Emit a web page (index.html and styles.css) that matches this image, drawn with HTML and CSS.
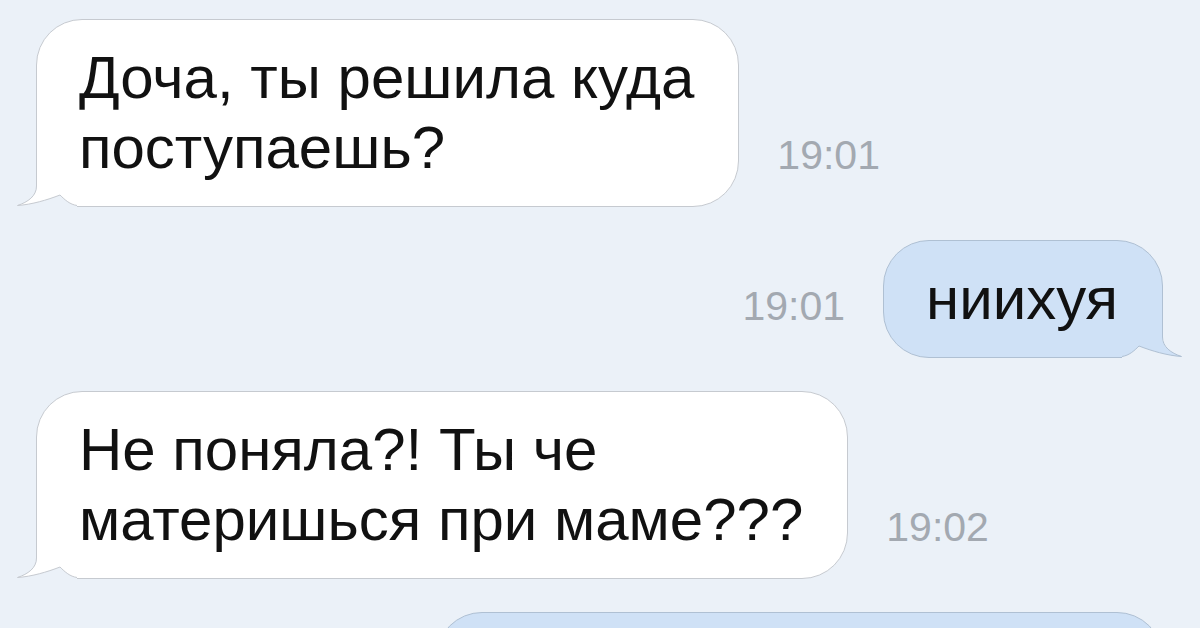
FILE: index.html
```html
<!DOCTYPE html>
<html lang="ru">
<head>
    <meta charset="UTF-8">
    <meta name="viewport" content="width=device-width, initial-scale=1.0">
    <title>Чат</title>
    <link rel="stylesheet" href="styles.css">
</head>
<body>
    <div class="chat">
        <div class="row">
            <div class="bubble bubble-in">
                Доча, ты решила куда<br>поступаешь?
                <svg class="tail" viewBox="0 0 60 41">
                    <rect class="tail-bg" x="0" y="18" width="60" height="23"/>
                    <path class="tail-fill" d="M20 0 V20 C20 30 11 36 0.5 39.5 C15 38.5 30 34 43 29 C48 34 53 38.5 60 39.5 V0 Z"/>
                    <path class="tail-line" d="M19.5 18 V20 C19.5 30 11 36 0.5 39.5 C15 38.5 30 34 43 29 C48 34 53 38.5 60 39.5"/>
                </svg>
            </div>
            <span class="time">19:01</span>
        </div>

        <div class="row row-out">
            <span class="time">19:01</span>
            <div class="bubble bubble-out">
                ниихуя
                <svg class="tail tail-out" viewBox="0 0 60 41">
                    <rect class="tail-bg" x="0" y="18" width="60" height="23"/>
                    <path class="tail-fill" d="M20 0 V20 C20 30 11 36 0.5 39.5 C15 38.5 30 34 43 29 C48 34 53 38.5 60 39.5 V0 Z"/>
                    <path class="tail-line" d="M19.5 18 V20 C19.5 30 11 36 0.5 39.5 C15 38.5 30 34 43 29 C48 34 53 38.5 60 39.5"/>
                </svg>
            </div>
        </div>

        <div class="row">
            <div class="bubble bubble-in">
                Не поняла?! Ты че<br>материшься при маме???
                <svg class="tail" viewBox="0 0 60 41">
                    <rect class="tail-bg" x="0" y="18" width="60" height="23"/>
                    <path class="tail-fill" d="M20 0 V20 C20 30 11 36 0.5 39.5 C15 38.5 30 34 43 29 C48 34 53 38.5 60 39.5 V0 Z"/>
                    <path class="tail-line" d="M19.5 18 V20 C19.5 30 11 36 0.5 39.5 C15 38.5 30 34 43 29 C48 34 53 38.5 60 39.5"/>
                </svg>
            </div>
            <span class="time">19:02</span>
        </div>

        <div class="row row-out">
            <div class="bubble bubble-out bubble-cut"></div>
        </div>
    </div>
</body>
</html>
```

FILE: styles.css
```css
body {
    margin: 0;
    height: 628px;
    overflow: hidden;
    background-color: #ebf1f8;
    font-family: "Liberation Sans", Arial, sans-serif;
}
.chat {
    display: flex;
    flex-direction: column;
    gap: 33px;
    padding: 19px 37px 0 36px;
}
.row {
    display: flex;
    align-items: flex-end;
    gap: 38px;
}
.row-out {
    justify-content: flex-end;
}
.bubble {
    position: relative;
    padding: 23px 44px 23px 42px;
    border-radius: 46px;
    font-size: 60px;
    line-height: 70px;
    color: #111;
}
.bubble-in {
    background-color: #fff;
    border: 1px solid #c6cad0;
    border-bottom-left-radius: 0;
}
.bubble-out {
    background-color: #cfe1f6;
    border: 1px solid #afc0d3;
    border-bottom-right-radius: 0;
}
.bubble-cut {
    width: 639px;
    height: 120px;
    border-radius: 46px;
}
.time {
    margin-bottom: 32px;
    font-size: 41px;
    line-height: 40px;
    color: #a3a9b1;
}
.tail {
    position: absolute;
    left: -20px;
    bottom: -1px;
    width: 60px;
    height: 41px;
}
.tail-out {
    left: auto;
    right: -20px;
    transform: scaleX(-1);
}
.tail-bg {
    fill: #ebf1f8;
}
.tail-line {
    fill: none;
    stroke: #c6cad0;
    stroke-width: 1;
}
.bubble-in .tail-fill {
    fill: #fff;
}
.bubble-out .tail-fill {
    fill: #cfe1f6;
}
.bubble-out .tail-line {
    stroke: #afc0d3;
}
```
